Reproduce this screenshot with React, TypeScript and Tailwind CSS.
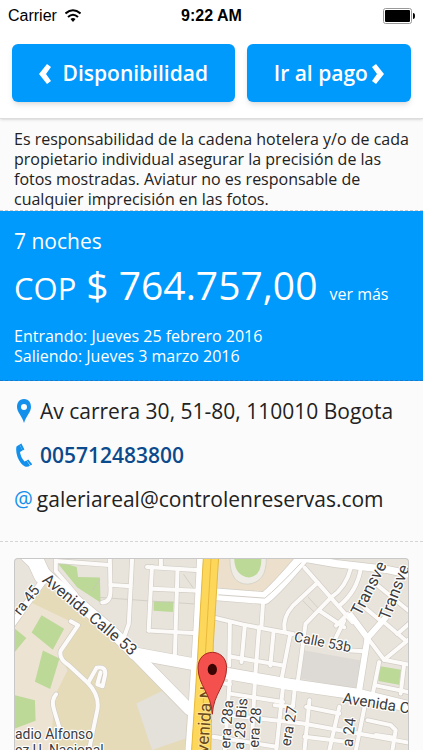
import React from 'react';

// Coordinates of every map drawing share the viewBox below
const AVENUES = [
  { d: 'M60 0 L150 85 L330 238 L415 322 L568 478', w: 34 },
  { d: 'M95 10 L125 75', w: 50 },
  { d: 'M400 308 L600 345', w: 36 },
  { d: 'M640 362 L870 402 L1075 432 L1240 472', w: 34 },
  { d: 'M130 85 L30 225', w: 20 },
  { d: 'M600 24 L590 220 L575 460 L565 600', w: 18 },
  { d: 'M640 130 L795 142 Q830 115 915 14', w: 36 },
  { d: 'M905 20 L1010 38 L1160 55 L1240 72', w: 22 },
  { d: 'M1055 195 L1105 262 L1080 420', w: 18 },
  { d: 'M1105 262 L1160 200', w: 18 },
];

const STREETS = [
  'M165 24 L165 60 L225 130', 'M165 30 L325 42', 'M328 24 L330 120 Q330 155 305 155',
  'M395 24 L385 220 L370 262', 'M330 102 L390 106', 'M455 48 L445 240', 'M440 48 L600 58',
  'M455 114 L595 120', 'M445 240 L590 248', 'M482 24 L482 48', 'M532 55 L524 315',
  'M640 200 L730 222 L880 250', 'M790 155 L785 230', 'M690 215 L688 345', 'M735 225 L725 335',
  'M778 230 L765 395', 'M822 240 L812 345', 'M872 250 L845 390', 'M690 318 L850 345',
  'M915 50 L1060 215', 'M855 240 Q848 200 880 165 L955 95', 'M895 390 L905 320 L918 220 L995 140 Q1040 110 1055 50',
  'M960 180 L1035 230', 'M1010 225 L1045 190', 'M1020 165 Q1075 120 1085 50',
  'M1125 95 L1235 185', 'M1090 165 L1150 215', 'M1035 210 L1010 260',
  'M1105 262 L1155 328 L1240 345', 'M1155 328 L1235 262', 'M1140 335 L1120 435', 'M1155 215 L1220 270', 'M1195 250 L1235 215', 'M1055 300 L1095 302',
  'M1130 405 L1240 428', 'M1215 345 L1205 430', 'M640 395 L690 402', 'M690 380 L675 600', 'M765 400 L755 600', 'M690 430 L850 455',
  'M850 410 L830 600', 'M885 420 L880 470 L825 465', 'M930 450 L915 600', 'M690 495 L910 520 L1240 580', 'M920 470 L1020 490',
  'M640 560 L830 590', 'M1020 470 L990 600', 'M1100 450 L1070 600', 'M1105 510 L1175 525 L1190 540 L1180 600', 'M915 560 L1040 575', 'M1130 555 L1180 562',
];

const CAMPUS_PATHS = [
  'M210 212 L232 224 L180 300 Q172 325 205 345 L262 398 Q298 435 290 480 L265 600',
  'M262 398 L288 352 Q316 346 314 372 L306 408 L290 402 L300 366',
  'M166 432 Q150 450 160 480 L175 530',
];

const GREENS = [
  '165,30 228,48 232,78 298,80 300,155 230,110', '460,152 520,152 518,184 460,180',
  '122,194 190,234 156,298 92,246', '30,225 76,262 30,318', '126,300 176,324 148,416 102,394',
  '30,432 102,450 104,512 30,540', '1140,347 1206,358 1200,403 1138,392',
];

const LABELS = [
  { text: 'Avenida Calle 53', x: 122, y: 90, angle: 40, size: 48 },
  { text: 'ra 45', x: 58, y: 196, angle: -52, size: 44 },
  { text: 'Calle 53b', x: 882, y: 272, angle: 11, size: 42 },
  { text: 'Transve', x: 1084, y: 198, angle: -63, size: 50 },
  { text: 'Transve', x: 1170, y: 212, angle: -69, size: 50 },
  { text: 'Avenida C', x: 1028, y: 458, angle: 9, size: 46 },
  { text: 'adio Alfonso', x: 42, y: 566, angle: 0, size: 42 },
  { text: 'ez U. Nacional', x: 42, y: 614, angle: 0, size: 42 },
  { text: 'era 28a', x: 690, y: 596, angle: -86, size: 44 },
  { text: 'a 28 Bis', x: 732, y: 600, angle: -86, size: 44 },
  { text: 'era 28', x: 776, y: 594, angle: -86, size: 44 },
  { text: 'era 27', x: 872, y: 590, angle: -80, size: 44 },
  { text: 'a 24', x: 1060, y: 592, angle: -84, size: 46 },
];

function Chevron({ d }: { d: string }) {
  return (
    <svg className="h-5 w-3 shrink-0" viewBox="0 0 12 20" fill="currentColor">
      <path d={d} />
    </svg>
  );
}

function StatusBar() {
  return (
    <div className="relative flex h-8 items-center justify-between px-2 font-['Liberation_Sans',sans-serif] text-base text-black">
      <div className="flex items-center gap-2">
        <span>Carrier</span>
        <svg className="h-4 w-4" viewBox="0 0 16 16" fill="none" stroke="currentColor" strokeWidth="2">
          <path d="M0.500 5.500 Q8 -1 15.500 5.500 M3 9 Q8 4.500 13 9" />
          <path d="M5.500 11 Q8 9 10.500 11 L8 14 Z" fill="currentColor" stroke="none" />
        </svg>
      </div>
      <span className="absolute inset-x-0 text-center font-bold">9:22 AM</span>
      <svg className="h-4 w-8" viewBox="0 0 32 16">
        <rect x="0.500" y="0.500" width="28" height="15" rx="2" fill="none" stroke="#999" />
        <rect x="2" y="2" width="25" height="12" rx="1" />
        <path d="M30 5 Q32 5 32 8 Q32 11 30 11 Z" />
      </svg>
    </div>
  );
}

function LocationMap() {
  return (
    <svg
      className="h-48 w-full rounded-t border-x border-t border-[#c8c8c8] bg-[#e8e4dc]"
      viewBox="39 24 1191 576"
      preserveAspectRatio="xMidYMin slice"
      role="img"
      aria-label="Mapa"
      fontFamily="Roboto, sans-serif"
    >
      <polygon points="95,145 240,210 175,300 200,370 150,600 30,600 30,225" fill="#ede3d3" />
      <polygon points="130,100 330,255 560,490 560,600 150,600 160,440 200,360 175,310 230,222 90,155" fill="#e5dbb9" />
      <polygon points="408,460 485,422 560,495 556,565 455,600" fill="#e4e0da" />
      <polygon points="657,24 910,24 795,125 655,110" fill="#ecdfcb" />
      <polygon points="915,300 1085,330 1070,415 903,385" fill="#ddd9d4" />
      {GREENS.map((points) => (
        <polygon key={points} points={points} fill="#bcd998" />
      ))}
      <path d="M690 24 Q690 100 744 100 Q800 95 800 24" fill="#eeece5" stroke="#d8d4ca" strokeWidth="3" />
      <path d="M703 24 Q705 75 748 80 Q785 75 785 24" fill="#bcd998" />
      <path d="M300 140 L440 150 L590 160 M275 120 L298 85 M550 70 L580 112 M910 150 L950 190 M925 138 L962 178" fill="none" stroke="#c9c4bb" strokeWidth="2" />

      <g fill="none" stroke="#d2cdc5" strokeLinecap="round" strokeLinejoin="round">
        {STREETS.map((d) => <path key={d} d={d} strokeWidth="16" />)}
        {CAMPUS_PATHS.map((d) => <path key={d} d={d} strokeWidth="16" />)}
        {AVENUES.map(({ d, w }) => <path key={d} d={d} strokeWidth={w + 4} />)}
      </g>
      <g fill="none" stroke="#fcfbf9" strokeLinecap="round" strokeLinejoin="round">
        {STREETS.map((d) => <path key={d} d={d} strokeWidth="12" />)}
        {CAMPUS_PATHS.map((d) => <path key={d} d={d} strokeWidth="12" />)}
        {AVENUES.map(({ d, w }) => <path key={d} d={d} strokeWidth={w} stroke="#fff" />)}
      </g>
      <path d="M655 132 L795 142 Q830 115 905 35" fill="none" stroke="#d2cdc5" strokeWidth="3" />

      <polygon points="610,20 656,20 640,280 632,610 574,610 592,330" fill="#fdd75a" stroke="#e5b93c" strokeWidth="3" />
      <path d="M633 24 L615 330 L604 600" fill="none" stroke="#e9b83c" strokeWidth="3" />

      {LABELS.map(({ text, x, y, angle, size }) => (
        <text
          key={`${text}-${x}`}
          transform={`translate(${x} ${y}) rotate(${angle})`}
          fontSize={size}
          fill="#3c3c3c"
          stroke="#fff"
          strokeWidth="7"
          strokeLinejoin="round"
          paintOrder="stroke"
        >
          {text}
        </text>
      ))}
      <text transform="translate(624 610) rotate(-86)" fontSize="52" fill="#6b4a1b" stroke="#ffe28a" strokeWidth="6" paintOrder="stroke">
        venida NQS
      </text>

      <path d="M637 492 C634 430 594 405 594 352 C594 290 680 290 680 352 C680 405 640 430 637 492 Z" fill="#f4504d" stroke="#a82724" strokeWidth="3" />
      <ellipse cx="637" cy="357" rx="14" ry="17" fill="#3b0503" />
    </svg>
  );
}

export default function App() {
  return (
    <main className="min-h-screen overflow-hidden bg-[#fbfbfb] font-['Open_Sans','Noto_Sans',sans-serif] text-[#222]">
      <header className="border-b border-[#ddd] bg-white pb-4 shadow-sm">
        <StatusBar />
        <div className="flex gap-3 px-3 pt-3 text-[21px] font-semibold whitespace-nowrap text-white">
          <button className="flex h-[58px] flex-[222] items-center justify-center gap-3 rounded-md bg-[#0099fc] pt-0.5 shadow-md">
            <Chevron d="M8 0 L12 3 L7 10 L12 17 L8 20 L0 10 Z" />
            Disponibilidad
          </button>
          <button className="flex h-[58px] flex-[164] items-center justify-center gap-1 rounded-md bg-[#0099fc] pt-0.5 shadow-md">
            Ir al pago
            <Chevron d="M4 0 L0 3 L5 10 L0 17 L4 20 L12 10 Z" />
          </button>
        </div>
      </header>

      <p className="border-b border-dashed border-[#ccc] pt-2.5 pr-2 pb-px pl-3.5 text-base leading-5">
        Es responsabilidad de la cadena hotelera y/o de cada propietario individual asegurar la precisión de las fotos
        mostradas. Aviatur no es responsable de cualquier imprecisión en las fotos.
      </p>

      <section className="border-b border-dashed border-[#1779c8] bg-[#0099fc] p-3.5 text-white">
        <h2 className="text-[21px] leading-8">7 noches</h2>
        <div className="flex items-baseline leading-[56px] whitespace-nowrap">
          <span className="text-[31px]">COP</span>
          <span className="ml-2.5 text-[39px]">$ 764.757,00</span>
          <a href="#detalle" className="ml-3 text-base">ver más</a>
        </div>
        <p className="pt-2.5 text-base leading-5">
          Entrando: Jueves 25 febrero 2016
          <br />
          Saliendo: Jueves 3 marzo 2016
        </p>
      </section>

      <address className="border-b border-dashed border-[#d5d5d5] px-3.5 pt-2 pb-5 text-[21px] leading-[44px] whitespace-nowrap not-italic">
        <div className="flex items-center gap-2">
          <svg className="ml-0.5 h-6 w-4" viewBox="0 0 16 24" fill="#1390ec">
            <path fillRule="evenodd" d="M8 0 C3 0 1 4 1 8 C1 13 6 17 8 24 C10 17 15 13 15 8 C15 4 13 0 8 0 Z M8 5 A3 3 0 1 1 8 11 A3 3 0 1 1 8 5 Z" />
          </svg>
          Av carrera 30, 51-80, 110010 Bogota
        </div>
        <div className="flex items-center gap-2">
          <svg className="ml-0.5 h-6 w-4" viewBox="0 0 16 24" fill="#1390ec">
            <path d="M0.500 3.500 L3.500 1.500 L6.500 7.500 L4 9 Q4.500 14 8.500 18.500 L10.500 17.500 L14 22.500 Q12 24.500 9 23.500 Q4.500 21.500 1.500 14 Q-0.500 8 0.500 3.500 Z" />
            <path d="M4.500 1 L7.500 7 M11.500 17 L15.500 22" fill="none" stroke="#1390ec" strokeWidth="2" />
          </svg>
          <a href="tel:005712483800" className="font-semibold text-[#0b4a8c]">005712483800</a>
        </div>
        <div className="flex items-center gap-1">
          <span className="text-[#1390ec]">@</span>
          <a href="mailto:galeriareal@controlenreservas.com">galeriareal@controlenreservas.com</a>
        </div>
      </address>

      <div className="px-3.5 pt-4">
        <LocationMap />
      </div>
    </main>
  );
}
